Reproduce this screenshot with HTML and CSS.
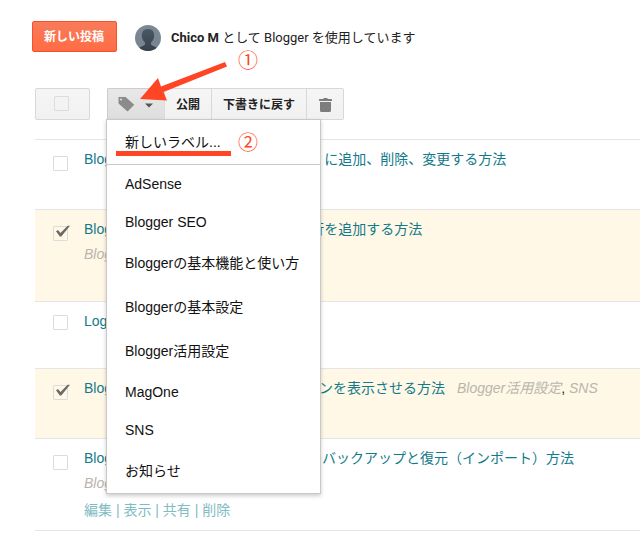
FILE: index.html
```html
<!DOCTYPE html>
<html lang="ja">
<head>
<meta charset="utf-8">
<title>Blogger</title>
<link rel="stylesheet" href="styles.css">
</head>
<body>
<header class="header">
  <button class="new-post" type="button">新しい投稿</button>
  <svg class="avatar" viewBox="0 0 26 26" aria-hidden="true">
    <defs>
      <linearGradient id="sky" x1="0" y1="0" x2="0" y2="1"><stop offset="0" stop-color="#7c8995"/><stop offset="1" stop-color="#77838f"/></linearGradient>
      <linearGradient id="person" x1="0" y1="0" x2="0" y2="1"><stop offset="0" stop-color="#4b5764"/><stop offset="1" stop-color="#36414c"/></linearGradient>
      <clipPath id="round"><circle cx="13" cy="13" r="13"/></clipPath>
    </defs>
    <g clip-path="url(#round)">
      <rect width="26" height="26" fill="url(#sky)"/>
      <path fill="url(#person)" d="M13 4C8.800 4 6.800 6.800 6.800 10.500c0 3 1.400 5.400 3.200 7v2c-1 1.500-4.500 2-6.500 4V26h19v-2.500c-2-2-5.500-2.500-6.500-4v-2c1.800-1.600 3.200-4 3.200-7C19.200 6.800 17.200 4 13 4z"/>
    </g>
  </svg>
  <p class="account"><b>Chico M</b> として Blogger を使用しています</p>
</header>

<div class="toolbar">
  <label class="select-all"><input class="check" type="checkbox" aria-label="すべて選択"></label>
  <div class="group">
    <button class="tool label-tool" type="button" aria-label="ラベル" aria-expanded="true">
      <svg width="17" height="16" viewBox="0 0 17 16" aria-hidden="true"><path fill="#8b8b8b" fill-rule="evenodd" d="M.5 1H7.500L16.300 8.800 9.500 15.500.500 7.500zM3 2.600a1 1 0 1 0 0 2 1 1 0 0 0 0-2z"/></svg>
      <svg width="8" height="5" viewBox="0 0 8 5" aria-hidden="true"><path fill="#555" d="M0 .5h8L4 4.500z"/></svg>
    </button>
    <button class="tool" type="button">公開</button>
    <button class="tool" type="button">下書きに戻す</button>
    <button class="tool trash-tool" type="button" aria-label="削除">
      <svg width="13" height="14" viewBox="0 0 13 14" aria-hidden="true"><path fill="#7d7d7d" d="M0 1.500Q0 1 1 1h3l1-1h3l1 1h3q1 0 1 .5V3H0zM1 4h11v8.500Q12 14 10.500 14h-8Q1 14 1 12.500z"/></svg>
    </button>
    <div class="menu">
      <button class="item new-label" type="button">新しいラベル...</button>
      <button class="item latin" type="button">AdSense</button>
      <button class="item latin" type="button">Blogger SEO</button>
      <button class="item" type="button">Bloggerの基本機能と使い方</button>
      <button class="item" type="button">Bloggerの基本設定</button>
      <button class="item" type="button">Blogger活用設定</button>
      <button class="item latin" type="button">MagOne</button>
      <button class="item latin" type="button">SNS</button>
      <button class="item" type="button">お知らせ</button>
    </div>
  </div>
</div>

<ul class="posts">
  <li class="post">
    <input class="check" type="checkbox" id="p1" aria-labelledby="t1">
    <div class="body"><a class="title" id="t1" href="#">BloggerのHTMLガジェットを「投稿」に追加、削除、変更する方法</a></div>
  </li>
  <li class="post selected tall">
    <input class="check" type="checkbox" id="p2" aria-labelledby="t2" checked>
    <div class="body">
      <a class="title" id="t2" href="#">BloggerのHTML投稿編集画面に空白行を追加する方法</a>
      <div><a class="tag" href="#">Blogger活用設定</a></div>
    </div>
  </li>
  <li class="post short">
    <input class="check" type="checkbox" id="p3" aria-labelledby="t3">
    <div class="body"><a class="title" id="t3" href="#">Logo Design</a></div>
  </li>
  <li class="post selected">
    <input class="check" type="checkbox" id="p4" aria-labelledby="t4" checked>
    <div class="body inline">
      <a class="title" id="t4" href="#">Bloggerの記事下部に SNSシェアボタンを表示させる方法</a>
      <span><a class="tag" href="#">Blogger活用設定</a>, <a class="tag" href="#">SNS</a></span>
    </div>
  </li>
  <li class="post tall">
    <input class="check" type="checkbox" id="p5" aria-labelledby="t5">
    <div class="body">
      <a class="title" id="t5" href="#">Bloggerのテンプレート XML 形式でのバックアップと復元（インポート）方法</a>
      <div><a class="tag" href="#">Blogger活用設定</a></div>
      <div class="actions"><a href="#">編集</a> | <a href="#">表示</a> | <a href="#">共有</a> | <a href="#">削除</a></div>
    </div>
  </li>
</ul>

<div class="notes">
  <svg class="arrow" width="88" height="40" viewBox="0 0 88 40" aria-hidden="true"><path fill="#ff4524" d="M0 37 18 16 21 24.500 85 0 87 4.500 23.500 30 27 38.500z"/></svg>
  <span class="mark one">①</span>
  <span class="mark two">②</span>
  <span class="underline"></span>
</div>
</body>
</html>
```
FILE: styles.css
```css
* { box-sizing: border-box; }

body {
  position: relative;
  margin: 0;
  background: #fff;
  color: #222;
  font: 14px/24px "Liberation Sans", "Noto Sans CJK JP", sans-serif;
}

button { font-family: inherit; cursor: pointer; }
a { color: inherit; text-decoration: none; }

.header {
  display: flex;
  align-items: center;
  padding: 21px 32px 0;
}

.new-post {
  height: 31px;
  padding: 0 12px 2px 11px;
  border: 1px solid #f9502c;
  border-radius: 2px;
  background: linear-gradient(#f97b59, #ff6c45);
  color: #fff;
  font-size: 12px;
  font-weight: bold;
}

.avatar {
  width: 26px;
  height: 26px;
  margin: 2px 10px 0 18px;
}

.account {
  margin: 2px 0 0;
  font-family: Roboto, "Noto Sans CJK JP", sans-serif;
  font-size: 13px;
}

.toolbar {
  display: flex;
  gap: 17px;
  margin: 36px 0 0 35px;
}

.select-all {
  display: flex;
  align-items: center;
  justify-content: center;
  width: 55px;
  height: 32px;
  padding: 0 2px 2px 0;
  border: 1px solid #d8d8d8;
  border-radius: 2px;
  background: linear-gradient(#f5f5f5, #f1f1f1);
}

.group {
  position: relative;
  display: flex;
}

.tool {
  height: 32px;
  padding: 0 11px 2px;
  border: 1px solid #d8d8d8;
  border-left-width: 0;
  background: linear-gradient(#f5f5f5, #f1f1f1);
  color: #222;
  font-size: 12px;
  font-weight: bold;
}

.label-tool {
  display: flex;
  align-items: center;
  gap: 10px;
  padding: 0 11px 0 10px;
  border-left-width: 1px;
  border-color: #ccc #dcdcdc #ccc #ccc;
  border-radius: 2px 0 0 2px;
  background: linear-gradient(#e8e8e8, #dedede);
}

.label-tool svg + svg { margin-top: 3px; }

.trash-tool {
  display: flex;
  align-items: center;
  padding: 2px 11px 0 12px;
  border-radius: 0 2px 2px 0;
}

.menu {
  position: absolute;
  z-index: 1;
  top: 31px;
  left: -1px;
  width: 215px;
  border: 1px solid #c8c8c8;
  background: #fff;
  box-shadow: 0 2px 4px rgba(0, 0, 0, .2);
}

.item {
  display: block;
  width: 100%;
  height: 44px;
  padding: 0 18px 3px;
  border: 0;
  background: none;
  color: #111;
  font-size: 14px;
  text-align: left;
}

.item.latin {
  height: 38px;
  padding-bottom: 0;
}

.item.new-label {
  height: 45px;
  border-bottom: 1px solid #c8c8c8;
}

.posts {
  margin: 19px 0 0 35px;
  padding: 0;
  border-bottom: 1px solid #e5e5e5;
  list-style: none;
}

.post {
  display: flex;
  gap: 16px;
  min-height: 70px;
  padding: 7px 0 6px 18px;
  border-top: 1px solid #e5e5e5;
  white-space: nowrap;
}

.post.tall { min-height: 92px; }
.post.short { min-height: 67px; }
.post.selected { background: #fff8e6; }
.post .check { margin-top: 9px; }
.post.short .check { margin-top: 6px; }

.check {
  position: relative;
  flex: none;
  width: 15px;
  height: 15px;
  margin: 0;
  border: 1px solid #dcdcdc;
  border-radius: 1px;
  appearance: none;
}

.check:checked::after {
  content: "";
  position: absolute;
  top: -2px;
  left: 2px;
  width: 14px;
  height: 12px;
  background: #6c6a65;
  clip-path: polygon(0 52%, 14% 42%, 32% 66%, 83% 6%, 100% 6%, 38% 96%, 27% 96%);
}

.body { line-height: 25px; }
.title { color: #127a8a; }
.tag { color: #b8b5ae; font-style: italic; }

.inline {
  display: flex;
  gap: 12px;
}

.actions {
  color: #7fbcc3;
  line-height: 28px;
}

.arrow {
  position: absolute;
  top: 62px;
  left: 140px;
}

.mark {
  position: absolute;
  left: 238px;
  color: #ff4524;
  font-family: "Noto Sans CJK JP", sans-serif;
  font-size: 20px;
}

.mark.one { top: 48px; }
.mark.two { top: 130px; }

.notes > * { z-index: 2; pointer-events: none; }

.underline {
  position: absolute;
  top: 151px;
  left: 116px;
  width: 115px;
  height: 5px;
  background: #ff4524;
}
```
